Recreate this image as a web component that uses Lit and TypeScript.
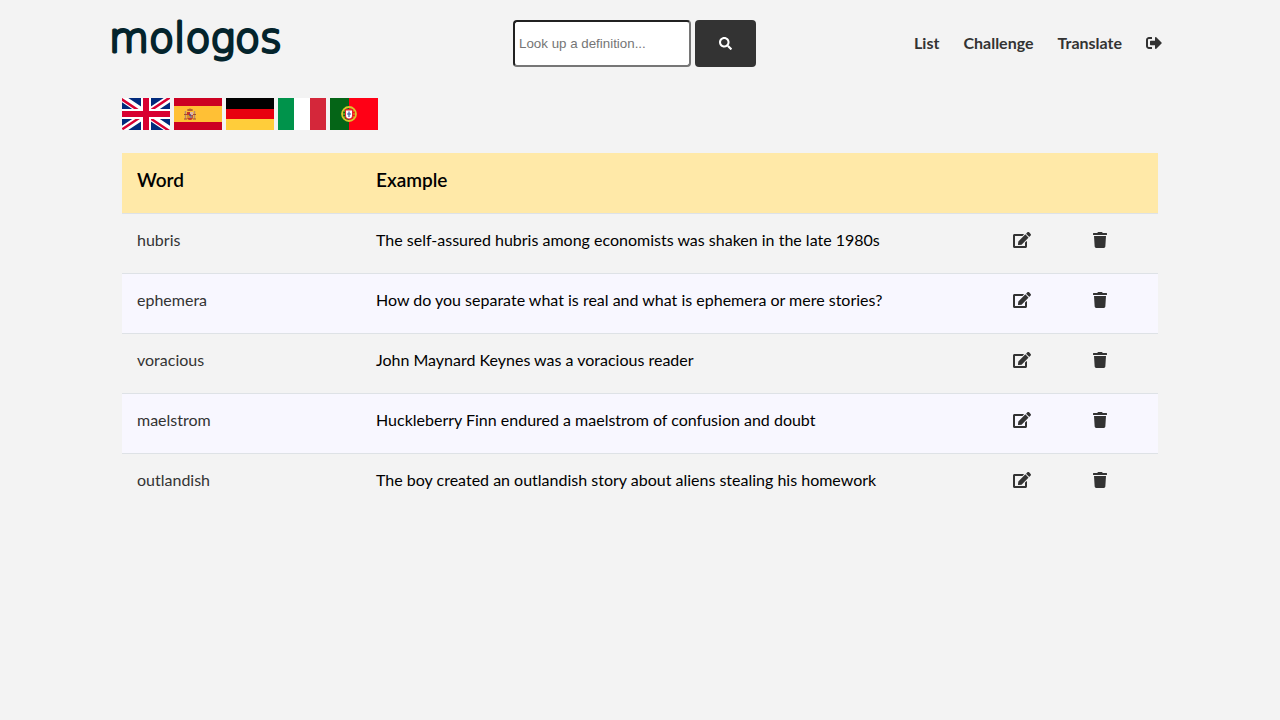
import { LitElement, html, css, svg } from "lit";
import { customElement, state } from "lit/decorators.js";

interface Entry {
  word: string;
  example: string;
}

const icons = {
  search: {
    w: 512,
    d: "M505 442.7L405.3 343c-4.500-4.500-10.600-7-17-7H372c27.600-35.300 44-79.700 44-128C416 93.100 322.900 0 208 0S0 93.100 0 208s93.100 208 208 208c48.300 0 92.700-16.400 128-44v16.300c0 6.400 2.500 12.500 7 17l99.700 99.700c9.400 9.400 24.600 9.400 33.900 0l28.300-28.300c9.400-9.400 9.400-24.600.1-34zM208 336c-70.700 0-128-57.200-128-128 0-70.700 57.200-128 128-128 70.700 0 128 57.200 128 128 0 70.700-57.200 128-128 128z",
  },
  signOut: {
    w: 512,
    d: "M497 273L329 441c-15 15-41 4.500-41-17v-96H152c-13.300 0-24-10.700-24-24v-96c0-13.300 10.700-24 24-24h136V88c0-21.400 25.900-32 41-17l168 168c9.300 9.400 9.300 24.600 0 34zM192 436v-40c0-6.600-5.400-12-12-12H96c-17.700 0-32-14.300-32-32V160c0-17.700 14.300-32 32-32h84c6.600 0 12-5.400 12-12V76c0-6.600-5.400-12-12-12H96c-53 0-96 43-96 96v192c0 53 43 96 96 96h84c6.600 0 12-5.400 12-12z",
  },
  edit: {
    w: 576,
    d: "M402.600 83.200l90.200 90.200c3.800 3.800 3.800 10 0 13.800L274.400 405.600l-92.800 10.300c-12.400 1.400-22.900-9.100-21.500-21.500l10.300-92.800L388.800 83.200c3.800-3.800 10-3.800 13.800 0zm162-22.900l-48.800-48.800c-15.200-15.200-39.900-15.200-55.200 0l-35.400 35.400c-3.800 3.800-3.800 10 0 13.800l90.200 90.200c3.800 3.800 10 3.800 13.800 0l35.400-35.400c15.200-15.300 15.200-40 0-55.200zM384 346.200V448H64V128h229.800c3.200 0 6.200-1.300 8.500-3.500l40-40c7.600-7.600 2.200-20.500-8.500-20.500H48C21.500 64 0 85.500 0 112v352c0 26.500 21.500 48 48 48h352c26.500 0 48-21.500 48-48V306.200c0-10.700-12.900-16-20.500-8.500l-40 40c-2.200 2.300-3.500 5.300-3.500 8.500z",
  },
  trash: {
    w: 448,
    d: "M432 32H312l-9.400-18.700A24 24 0 0 0 281.100 0H166.800a23.720 23.720 0 0 0-21.400 13.300L136 32H16A16 16 0 0 0 0 48v32a16 16 0 0 0 16 16h416a16 16 0 0 0 16-16V48a16 16 0 0 0-16-16zM53.200 467a48 48 0 0 0 47.900 45h245.800a48 48 0 0 0 47.900-45L416 128H32z",
  },
};

const icon = (name: keyof typeof icons) => html`<svg
  class="icon icon-${name}"
  viewBox="0 0 ${icons[name].w} 512"
  aria-hidden="true"
>
  <path fill="currentColor" d=${icons[name].d}></path>
</svg>`;

const flags = [
  {
    name: "English",
    art: svg`
      <rect width="48" height="32" fill="#012a7c"/>
      <path d="M0 0L48 32M48 0L0 32" stroke="#fff" stroke-width="7"/>
      <path d="M0 0L24 16M48 32L24 16" stroke="#d80031" stroke-width="2.500" transform="translate(-.6 1)"/>
      <path d="M48 0L24 16M0 32L24 16" stroke="#d80031" stroke-width="2.500" transform="translate(.3 -.8)"/>
      <path d="M24 0V32M0 16H48" stroke="#fff" stroke-width="10"/>
      <path d="M24 0V32M0 16H48" stroke="#d80031" stroke-width="6"/>`,
  },
  {
    name: "Spanish",
    art: svg`
      <rect width="48" height="32" fill="#cc0022"/>
      <rect y="8" width="48" height="16" fill="#ffc035"/>
      <path d="M11.500 13v8M20.500 13v8" stroke="#b98a70" stroke-width="1.400"/>
      <path d="M10 16.500h3M19 16.500h3M10 21h3M19 21h3" stroke="#a4502b"/>
      <path d="M13 14h6v5a3 3 0 0 1-6 0z" fill="#c4352b"/>
      <path d="M16 14h3v3h-3z" fill="#dfb6a8"/>
      <path d="M13 17h3v3h-3z" fill="#d9912c"/>
      <path d="M16 17.500h2.500v2.500H16z" fill="#9b7a78"/>
      <path d="M13.500 13l-.5-1.500 3-1 3 1-.5 1.500z" fill="#b8602a"/>
      <circle cx="16" cy="17" r="1" fill="#47508c"/>`,
  },
  {
    name: "German",
    art: svg`
      <rect width="48" height="11" fill="#000"/>
      <rect y="11" width="48" height="10" fill="#e8000f"/>
      <rect y="21" width="48" height="11" fill="#ffcd3a"/>`,
  },
  {
    name: "Italian",
    art: svg`
      <rect width="16" height="32" fill="#00934b"/>
      <rect x="16" width="16" height="32" fill="#fff"/>
      <rect x="32" width="16" height="32" fill="#d4273a"/>`,
  },
  {
    name: "Portuguese",
    art: svg`
      <rect width="19" height="32" fill="#056517"/>
      <rect x="19" width="29" height="32" fill="#ff0015"/>
      <circle cx="19" cy="16" r="7" fill="none" stroke="#d8c72c" stroke-width="1.800"/>
      <path d="M13 12l12 8M13 20l12-8M12 16h14" stroke="#d8c72c" stroke-width=".9"/>
      <path d="M15 11h8v6.500a4 4 0 0 1-8 0z" fill="#e3232c"/>
      <path d="M16 12.500h6v5a3 3 0 0 1-6 0z" fill="#fff"/>
      <path d="M19 13.500v5.500M17 16h4" stroke="#3a55a0" stroke-width="1.200"/>`,
  },
];

@customElement("app-root")
export class AppRoot extends LitElement {
  @state() private entries: Entry[] = [
    { word: "hubris", example: "The self-assured hubris among economists was shaken in the late 1980s" },
    { word: "ephemera", example: "How do you separate what is real and what is ephemera or mere stories?" },
    { word: "voracious", example: "John Maynard Keynes was a voracious reader" },
    { word: "maelstrom", example: "Huckleberry Finn endured a maelstrom of confusion and doubt" },
    { word: "outlandish", example: "The boy created an outlandish story about aliens stealing his homework" },
  ];

  static styles = css`
    :host {
      display: block;
      min-height: 100vh;
      background: #f3f3f3;
      color: #000;
      font: 16px/24px Lato, sans-serif;
    }
    *,
    *::before,
    *::after {
      box-sizing: border-box;
    }
    a {
      color: #333;
      text-decoration: none;
    }
    .icon {
      display: block;
      height: 16px;
    }
    .header {
      display: flex;
      align-items: center;
      justify-content: space-between;
      max-width: 1060px;
      margin: 0 auto;
      padding: 20px 8px 20px 0;
    }
    .brand {
      flex: 0 1 245px;
    }
    .logo {
      display: block;
      width: 180px;
      height: 47px;
      overflow: visible;
    }
    .logo-text {
      font: 200 41px "DejaVu Sans", "DejaVu Sans Light", sans-serif;
      fill: #04242c;
      stroke: #04242c;
      stroke-width: 3px;
      stroke-linejoin: round;
    }
    .search {
      display: flex;
      gap: 4px;
    }
    .search-input {
      width: 178px;
      height: 47px;
      padding: 1px 4px;
      border: 2px inset #767676;
      border-radius: 4px;
      background: #fff;
      font-family: "Liberation Sans", Arial, sans-serif;
    }
    .search-input::placeholder {
      color: #757575;
    }
    .search-button {
      display: grid;
      place-items: center;
      width: 61px;
      height: 47px;
      padding: 0;
      border: 0;
      border-radius: 4px;
      background: #333;
      color: #fff;
    }
    .icon-search {
      height: 13px;
    }
    .nav {
      display: flex;
      align-items: center;
      gap: 24px;
      padding-bottom: 2px;
      font-weight: 700;
    }
    .content {
      max-width: 1060px;
      margin: 0 auto;
      padding: 11px 12px;
    }
    .flags {
      display: flex;
      gap: 4px;
    }
    .flag {
      padding: 0;
      border: 0;
      background: none;
    }
    .flag-art {
      display: block;
      width: 48px;
      height: 32px;
    }
    .words {
      width: 100%;
      margin-top: 23px;
      border-collapse: separate;
      border-spacing: 0;
      table-layout: fixed;
    }
    .col-word {
      width: 239px;
    }
    .col-action {
      width: 80px;
    }
    .head {
      padding: 15px 15px 21px;
      background: #ffe9a8;
      font-size: 19px;
      font-weight: 600;
      text-align: left;
    }
    .cell {
      padding: 14px 15px 21px;
      border-top: 1px solid #dee2e6;
      vertical-align: top;
    }
    .row:nth-child(even) {
      background: #f8f7ff;
    }
    .action {
      display: flex;
      align-items: center;
      height: 24px;
      padding: 0;
      border: 0;
      background: none;
      color: #333;
    }
  `;

  private remove(entry: Entry) {
    this.entries = this.entries.filter((e) => e !== entry);
  }

  render() {
    return html`
      <header class="header">
        <a class="brand" href="#" aria-label="mologos">
          <svg class="logo" viewBox="0 0 180 47">
            <text class="logo-text" x="-1" y="32">mologos</text>
          </svg>
        </a>
        <form class="search" role="search">
          <input class="search-input" type="text" aria-label="Look up a definition" placeholder="Look up a definition..." />
          <button class="search-button" type="button" aria-label="Search">${icon("search")}</button>
        </form>
        <nav class="nav">
          <a href="#list">List</a>
          <a href="#challenge">Challenge</a>
          <a href="#translate">Translate</a>
          <a href="#logout" aria-label="Log out">${icon("signOut")}</a>
        </nav>
      </header>
      <main class="content">
        <div class="flags">
          ${flags.map(
            (f) => html`<button class="flag" type="button" aria-label=${f.name}>
              <svg class="flag-art" viewBox="0 0 48 32" aria-hidden="true">${f.art}</svg>
            </button>`
          )}
        </div>
        <table class="words">
          <colgroup>
            <col class="col-word" />
            <col />
            <col class="col-action" />
            <col class="col-action" />
          </colgroup>
          <thead>
            <tr>
              <th class="head" scope="col">Word</th>
              <th class="head" scope="col">Example</th>
              <th class="head" scope="col" aria-label="Edit"></th>
              <th class="head" scope="col" aria-label="Delete"></th>
            </tr>
          </thead>
          <tbody>
            ${this.entries.map(
              (e) => html`<tr class="row">
                <td class="cell"><a href="#${e.word}">${e.word}</a></td>
                <td class="cell">${e.example}</td>
                <td class="cell">
                  <button class="action" type="button" aria-label="Edit ${e.word}">${icon("edit")}</button>
                </td>
                <td class="cell">
                  <button class="action" type="button" aria-label="Delete ${e.word}" @click=${() => this.remove(e)}>
                    ${icon("trash")}
                  </button>
                </td>
              </tr>`
            )}
          </tbody>
        </table>
      </main>
    `;
  }
}
